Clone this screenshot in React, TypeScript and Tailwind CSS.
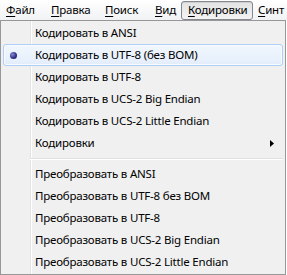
const font = { fontFamily: '"Noto Sans", "Open Sans", sans-serif' };

type Item = { label: string; checked?: boolean; submenu?: boolean; hot?: boolean } | "sep";

const items: Item[] = [
  { label: "Кодировать в ANSI" },
  { label: "Кодировать в UTF-8 (без BOM)", checked: true, hot: true },
  { label: "Кодировать в UTF-8" },
  { label: "Кодировать в UCS-2 Big Endian" },
  { label: "Кодировать в UCS-2 Little Endian" },
  { label: "Кодировки", submenu: true },
  "sep",
  { label: "Преобразовать в ANSI" },
  { label: "Преобразовать в UTF-8 без BOM" },
  { label: "Преобразовать в UTF-8" },
  { label: "Преобразовать в UCS-2 Big Endian" },
  { label: "Преобразовать в UCS-2 Little Endian" },
];

const bar = [
  { label: "Файл", w: "w-[44px]", pl: "pl-[6px]" },
  { label: "Правка", w: "w-[53px]", pl: "pl-[7px]" },
  { label: "Поиск", w: "w-[50px]", pl: "pl-[8px]" },
  { label: "Вид", w: "w-[34px]", pl: "pl-[8px]" },
];

function Accel({ text }: { text: string }) {
  return (
    <span>
      <span className="underline underline-offset-2">{text[0]}</span>
      {text.slice(1)}
    </span>
  );
}

export default function App() {
  return (
    <div
      className="w-[287px] h-[275px] overflow-hidden bg-white text-[11.5px] tracking-[-0.2px] text-black"
      style={font}
    >
      <div className="flex h-[20px] items-center bg-gradient-to-b from-white to-[#f1f2f5]">
        {bar.map((b) => (
          <div key={b.label} className={`${b.w} ${b.pl} shrink-0 leading-[20px]`}>
            <Accel text={b.label} />
          </div>
        ))}
        <div className="flex h-[19px] w-[72px] shrink-0 items-center rounded-[3px] border border-[#828790] bg-gradient-to-b from-[#e3e3e3] to-[#f3f3f3] pl-[6px] shadow-[inset_0_1px_0_#d0d0d0]">
          <Accel text="Кодировки" />
        </div>
        <div className="shrink-0 whitespace-nowrap pl-[5px] leading-[20px]">
          <Accel text="Синт" />
        </div>
      </div>

      <div className="relative w-[286px] border border-[#979797] bg-[#f0f0f0] px-[2px] py-px">
        <div className="absolute top-0 bottom-0 left-[29px] w-px bg-[#e2e3e3]" />
        <div className="absolute top-0 bottom-0 left-[30px] w-px bg-white" />
        {items.map((it, i) =>
          it === "sep" ? (
            <div key={i} className="relative h-[9px] pt-[4px] pl-[27px]">
              <div className="h-[2px] border-t border-[#e0e0e0] border-b border-b-white" />
            </div>
          ) : (
            <div
              key={i}
              className={`relative flex h-[22px] items-center ${
                it.hot
                  ? "rounded-[3px] border border-[#aecff7] bg-gradient-to-b from-[#f2f7fd] to-[#e3edfb] shadow-[inset_0_0_0_1px_#f8fbfe]"
                  : "border border-transparent"
              }`}
            >
              <div className="flex w-[31px] shrink-0 items-center pl-[6px]">
                {it.checked && (
                  <span className="block h-[7px] w-[7px] rounded-full bg-[radial-gradient(circle_at_35%_35%,#8a8ad0,#2c2c84_60%,#1a1a50)]" />
                )}
              </div>
              <span className="flex-1 whitespace-nowrap">{it.label}</span>
              {it.submenu && (
                <svg width="4" height="7" viewBox="0 0 4 7" className="mr-[8px]">
                  <path d="M0 0 L4 3.5 L0 7 Z" fill="#000" />
                </svg>
              )}
            </div>
          )
        )}
      </div>
    </div>
  );
}
